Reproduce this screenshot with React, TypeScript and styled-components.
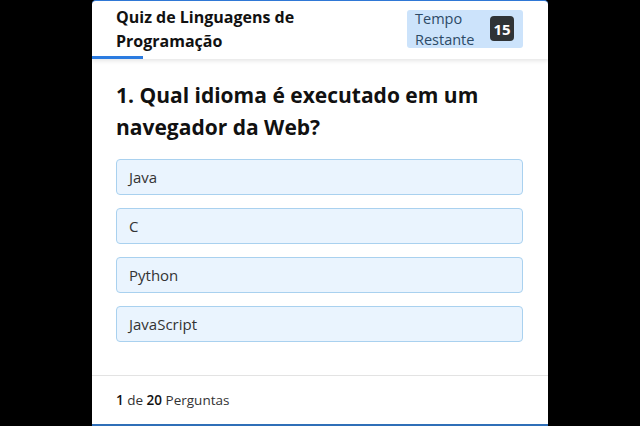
import React from "react";
import styled, { createGlobalStyle } from "styled-components";

const Global = createGlobalStyle`
  html, body { margin: 0; padding: 0; background: #000; }
  body { font-family: "Open Sans", "Noto Sans", sans-serif; }
  * { box-sizing: border-box; }
`;

const Card = styled.div`
  width: 456px;
  height: 426px;
  margin: 0 auto;
  background: #fff;
  border-top: 1px solid #2f78d6;
  border-bottom: 2px solid #2f6fb8;
  border-radius: 4px 4px 0 0;
  display: flex;
  flex-direction: column;
  overflow: hidden;
`;

const Header = styled.header`
  display: flex;
  flex-direction: column;
  box-shadow: 0 2px 4px rgba(0, 0, 0, 0.1);
  position: relative;
  z-index: 1;
`;

const HeaderRow = styled.div`
  height: 55px;
  padding: 0 25px 0 24px;
  display: flex;
  align-items: center;
  justify-content: space-between;
`;

const Title = styled.h1`
  margin: 0;
  font-size: 16px;
  line-height: 24px;
  font-weight: 700;
  color: #111;
  width: 230px;
`;

const Timer = styled.div`
  width: 116px;
  height: 38px;
  background: #cce3fb;
  border-radius: 3px;
  display: flex;
  align-items: center;
  justify-content: space-between;
  padding: 0 9px 0 8px;
`;

const TimerLabel = styled.span`
  font-size: 14.5px;
  line-height: 21px;
  color: #2d4a66;
`;

const Badge = styled.span`
  width: 24px;
  height: 25px;
  border-radius: 4px;
  background: #2f3336;
  color: #fff;
  font-weight: 700;
  font-size: 15px;
  display: flex;
  align-items: center;
  justify-content: center;
`;

const Track = styled.div`
  height: 3px;
`;

const Fill = styled.div`
  height: 3px;
  background: #2b7be0;
`;

const Body = styled.main`
  flex: 1;
  padding: 20px 25px 0 24px;
  display: flex;
  flex-direction: column;
`;

const Question = styled.h2`
  margin: 0 0 16px;
  font-size: 21px;
  line-height: 32px;
  font-weight: 700;
  color: #111;
`;

const Options = styled.div`
  display: flex;
  flex-direction: column;
  gap: 13px;
`;

const Option = styled.button`
  height: 36px;
  width: 100%;
  text-align: left;
  padding: 0 12px;
  background: #eaf4fe;
  border: 1px solid #a9d1ef;
  border-radius: 4px;
  font-family: inherit;
  font-size: 15px;
  color: #333;
`;

const Footer = styled.footer`
  height: 49px;
  border-top: 1px solid #e3e3e3;
  padding: 0 24px;
  display: flex;
  align-items: center;
  font-size: 13.5px;
  color: #333;
  b { color: #111; font-weight: 600; }
`;

const options = ["Java", "C", "Python", "JavaScript"];

export default function App() {
  const progress = 51 / 456;
  return (
    <>
      <Global />
      <Card>
        <Header>
          <HeaderRow>
            <Title>Quiz de Linguagens de Programação</Title>
            <Timer>
              <TimerLabel>
                Tempo
                <br />
                Restante
              </TimerLabel>
              <Badge>15</Badge>
            </Timer>
          </HeaderRow>
          <Track>
            <Fill style={{ width: `${progress * 100}%` }} />
          </Track>
        </Header>
        <Body>
          <Question>1. Qual idioma é executado em um navegador da Web?</Question>
          <Options>
            {options.map((o) => (
              <Option key={o}>{o}</Option>
            ))}
          </Options>
        </Body>
        <Footer>
          <span>
            <b>1</b> de <b>20</b> Perguntas
          </span>
        </Footer>
      </Card>
    </>
  );
}
